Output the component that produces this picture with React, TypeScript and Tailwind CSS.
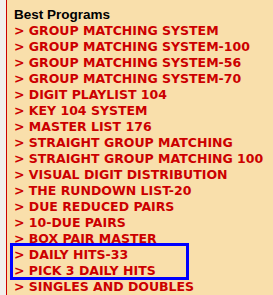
import React from 'react'

const programs = [
    'GROUP MATCHING SYSTEM',
    'GROUP MATCHING SYSTEM-100',
    'GROUP MATCHING SYSTEM-56',
    'GROUP MATCHING SYSTEM-70',
    'DIGIT PLAYLIST 104',
    'KEY 104 SYSTEM',
    'MASTER LIST 176',
    'STRAIGHT GROUP MATCHING',
    'STRAIGHT GROUP MATCHING 100',
    'VISUAL DIGIT DISTRIBUTION',
    'THE RUNDOWN LIST-20',
    'DUE REDUCED PAIRS',
    '10-DUE PAIRS',
    'BOX PAIR MASTER',
    'DAILY HITS-33',
    'PICK 3 DAILY HITS',
    'SINGLES AND DOUBLES',
]

const App: React.FC = () => {
    return (
        <div className="flex w-[273px] h-[295px] overflow-hidden bg-[#f1efec] font-bold leading-[16px]">
            <div className="w-[6px] shrink-0" />
            <div className="relative flex-1 border-l border-[#cc0000] bg-[#f9dfab] pl-[7px] pt-[7px]">
                <div className="text-black font-['Liberation_Sans',Arial,sans-serif] text-[13.5px]">Best Programs</div>
                {programs.map((p, idx) => (
                    <div key={idx} className="text-[#cc0000] whitespace-nowrap font-['DejaVu_Sans',Verdana,sans-serif] text-[12.5px]">&gt; {p}</div>
                ))}
                <div className="absolute left-[3px] top-[243px] w-[179px] h-[37px] border-[3px] border-[#0000ff]" />
            </div>
        </div>
    )
}

export default App
